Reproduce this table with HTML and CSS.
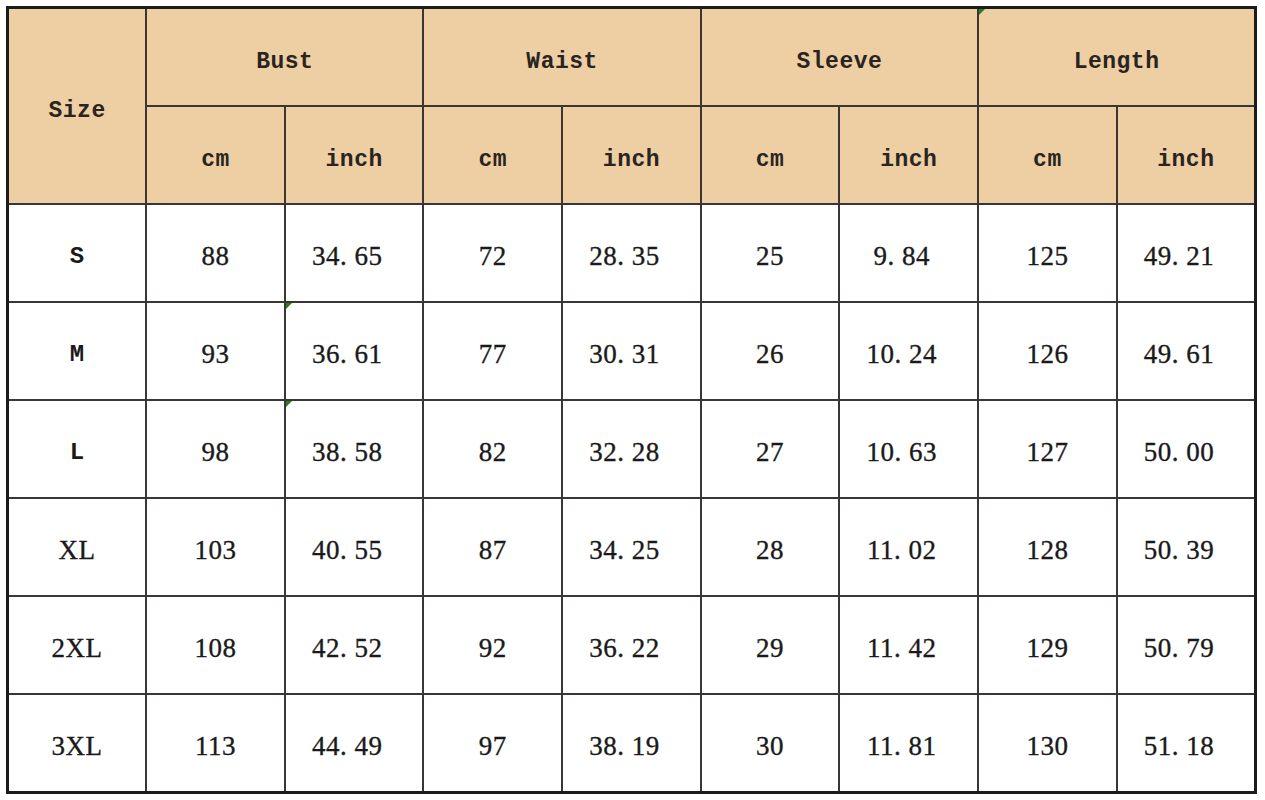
FILE: index.html
```html
<!DOCTYPE html>
<html>
<head>
<meta charset="utf-8">
<link rel="stylesheet" href="styles.css">
</head>
<body>
<table class="size-table">
  <thead>
    <tr>
      <th rowspan="2" class="head">Size</th>
      <th colspan="2" class="head">Bust</th>
      <th colspan="2" class="head">Waist</th>
      <th colspan="2" class="head">Sleeve</th>
      <th colspan="2" class="head mark">Length</th>
    </tr>
    <tr>
      <th class="head">cm</th><th class="head">inch</th>
      <th class="head">cm</th><th class="head">inch</th>
      <th class="head">cm</th><th class="head">inch</th>
      <th class="head">cm</th><th class="head">inch</th>
    </tr>
  </thead>
  <tbody>
    <tr><td class="label mono">S</td><td>88</td><td>34. 65</td><td>72</td><td>28. 35</td><td>25</td><td>9. 84</td><td>125</td><td>49. 21</td></tr>
    <tr><td class="label mono">M</td><td>93</td><td class="mark">36. 61</td><td>77</td><td>30. 31</td><td>26</td><td>10. 24</td><td>126</td><td>49. 61</td></tr>
    <tr><td class="label mono">L</td><td>98</td><td class="mark">38. 58</td><td>82</td><td>32. 28</td><td>27</td><td>10. 63</td><td>127</td><td>50. 00</td></tr>
    <tr><td class="label">XL</td><td>103</td><td>40. 55</td><td>87</td><td>34. 25</td><td>28</td><td>11. 02</td><td>128</td><td>50. 39</td></tr>
    <tr><td class="label">2XL</td><td>108</td><td>42. 52</td><td>92</td><td>36. 22</td><td>29</td><td>11. 42</td><td>129</td><td>50. 79</td></tr>
    <tr><td class="label">3XL</td><td>113</td><td>44. 49</td><td>97</td><td>38. 19</td><td>30</td><td>11. 81</td><td>130</td><td>51. 18</td></tr>
  </tbody>
</table>
</body>
</html>
```
FILE: styles.css
```css
html, body {
  margin: 0;
  padding: 0;
  background: #ffffff;
}

body {
  padding: 6px 0 0 6px;
}

.size-table {
  border-collapse: collapse;
  table-layout: fixed;
  width: 1251px;
  border: 3px solid #1c1c1c;
  color: #1e1e1e;
}

.size-table th,
.size-table td {
  border: 2px solid #3a3636;
  text-align: center;
  vertical-align: middle;
  padding: 0;
  position: relative;
}

.size-table th {
  background: #edcfa3;
  font-family: "Liberation Mono", "Courier New", monospace;
  font-weight: bold;
  font-size: 23px;
  letter-spacing: 0.5px;
  color: #2a2420;
  height: 87px;
  padding-top: 9px;
}

.size-table td {
  font-family: "Liberation Serif", "Times New Roman", serif;
  font-size: 27px;
  letter-spacing: 0.5px;
  color: #1a1a1a;
  -webkit-text-stroke: 0.35px #1a1a1a;
  height: 90px;
  padding-top: 6px;
}

.size-table td:nth-child(2n+3) {
  padding-right: 14px;
}

.size-table td.mono {
  font-family: "Liberation Mono", "Courier New", monospace;
  font-weight: bold;
  font-size: 24px;
  -webkit-text-stroke: 0;
}

.mark::before {
  content: "";
  position: absolute;
  left: 0;
  top: 0;
  width: 0;
  height: 0;
  border-top: 6px solid #2f7a1f;
  border-right: 6px solid transparent;
}
```
